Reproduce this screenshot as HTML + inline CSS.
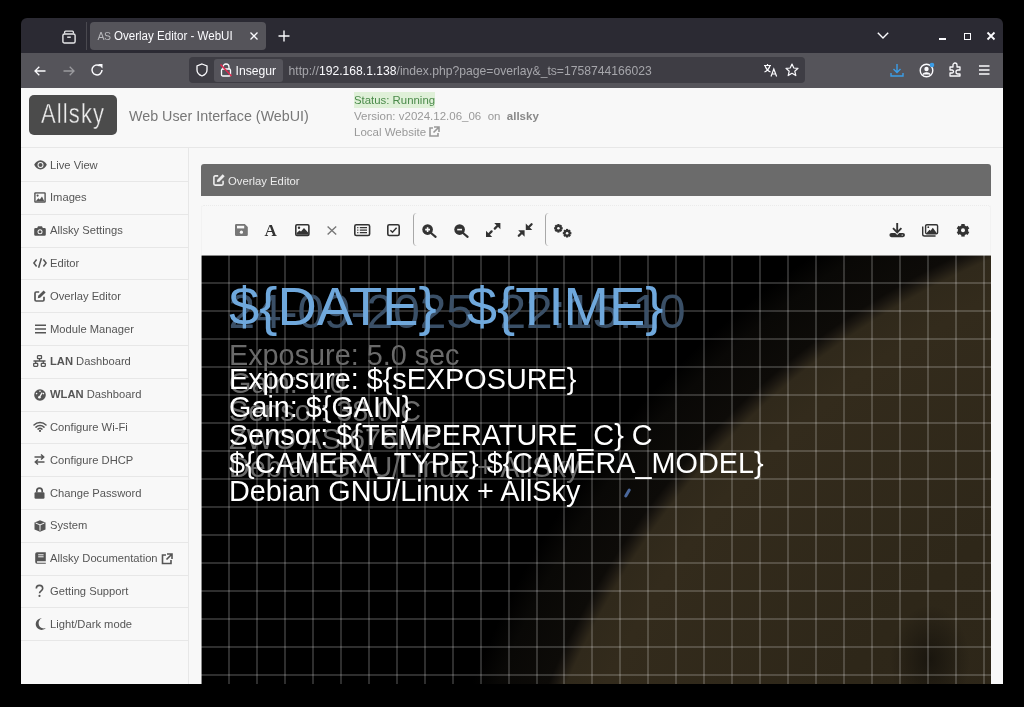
<!DOCTYPE html>
<html><head><meta charset="utf-8">
<style>
*{margin:0;padding:0;box-sizing:border-box}
html,body{width:1024px;height:707px;background:#000;overflow:hidden;font-family:"Liberation Sans",sans-serif}
.a{position:absolute}
.t{position:absolute;white-space:nowrap;line-height:1}
svg{position:absolute;overflow:visible}
#win{position:absolute;left:21px;top:18px;width:982px;height:666px;background:#2b2a33;border-radius:6px 6px 0 0;overflow:hidden}
.side{position:absolute;left:21px;width:167px;height:33px}
.side span{position:absolute;left:29px;top:12.5px;font-size:11.2px;color:#555;line-height:1;white-space:nowrap}

</style></head><body><div style="position:absolute;left:0;top:0;width:1024px;height:707px;will-change:transform">
<div id="win"></div>

<!-- ============ TAB BAR ============ -->
<svg style="left:61.5px;top:29.5px" width="14" height="14" viewBox="0 0 14 14"><path d="M2.6 3.6V2.2A1 1 0 0 1 3.6 1.2H10.4A1 1 0 0 1 11.4 2.2V3.6" fill="none" stroke="#e8e8ea" stroke-width="1.3"/><rect x="0.9" y="4" width="12.2" height="9" rx="1.6" fill="none" stroke="#e8e8ea" stroke-width="1.4"/><path d="M5.2 7.2H8.8" stroke="#e8e8ea" stroke-width="1.4"/></svg>
<div class="a" style="left:86px;top:22px;width:1px;height:28px;background:#4a4950"></div>
<div class="a" style="left:90px;top:22px;width:176px;height:28px;background:#55545a;border-radius:4px"></div>
<div class="t" style="left:97.5px;top:30.5px;font-size:10.5px;color:#b8b8bc;letter-spacing:-0.6px">AS</div>
<div class="t" style="left:113.5px;top:29.5px;font-size:12.3px;color:#fbfbfe;transform:scaleX(0.94);transform-origin:0 0">Overlay Editor - WebUI</div>
<svg style="left:250px;top:32px" width="8" height="8" viewBox="0 0 8 8"><path d="M0.5 0.5L7.5 7.5M7.5 0.5L0.5 7.5" stroke="#fbfbfe" stroke-width="1.3"/></svg>
<svg style="left:278px;top:30px" width="12" height="12" viewBox="0 0 12 12"><path d="M6 0.5V11.5M0.5 6H11.5" stroke="#fbfbfe" stroke-width="1.4"/></svg>
<!-- window controls -->
<svg style="left:877px;top:32px" width="12" height="7" viewBox="0 0 12 7"><path d="M0.8 0.8L6 6L11.2 0.8" fill="none" stroke="#fbfbfe" stroke-width="1.4"/></svg>
<div class="a" style="left:939px;top:38px;width:7px;height:2px;background:#fbfbfe"></div>
<div class="a" style="left:963.5px;top:32.5px;width:7.5px;height:7.5px;border:1.7px solid #fbfbfe"></div>
<svg style="left:987px;top:32px" width="8" height="8" viewBox="0 0 8 8"><path d="M0.5 0.5L7.5 7.5M7.5 0.5L0.5 7.5" stroke="#fbfbfe" stroke-width="1.8"/></svg>

<!-- ============ NAV BAR ============ -->
<div class="a" style="left:21px;top:53px;width:982px;height:35px;background:#55545a"></div>
<svg style="left:34px;top:65.5px" width="12" height="10" viewBox="0 0 12 10"><path d="M11.5 5H1.2M5.3 0.8L1 5L5.3 9.2" fill="none" stroke="#fbfbfe" stroke-width="1.3"/></svg>
<svg style="left:63px;top:65.5px" width="12" height="10" viewBox="0 0 12 10"><path d="M0.5 5H10.8M6.7 0.8L11 5L6.7 9.2" fill="none" stroke="#9a9a9e" stroke-width="1.3"/></svg>
<svg style="left:90px;top:63px" width="14" height="14" viewBox="0 0 14 14"><path d="M12 7A5 5 0 1 1 9.8 2.8" fill="none" stroke="#fbfbfe" stroke-width="1.5"/><path d="M8 1H12.5V5.5Z" fill="#fbfbfe"/></svg>
<div class="a" style="left:189px;top:57px;width:616px;height:26px;background:#3e3d44;border-radius:4px"></div>
<svg style="left:196px;top:63px" width="12" height="14" viewBox="0 0 12 14"><path d="M6 1L11 3V7C11 10 8.5 12 6 13C3.5 12 1 10 1 7V3Z" fill="none" stroke="#fbfbfe" stroke-width="1.3"/></svg>
<div class="a" style="left:213.5px;top:59px;width:69px;height:22.5px;background:#55545b;border-radius:3px"></div>
<svg style="left:220px;top:63px" width="12" height="14" viewBox="0 0 12 14"><path d="M3 6V4A3 3 0 0 1 9 4V6" fill="none" stroke="#fbfbfe" stroke-width="1.3"/><rect x="1.5" y="6" width="9" height="7" rx="1.3" fill="none" stroke="#fbfbfe" stroke-width="1.3"/><path d="M0.5 1.5L11.5 13" stroke="#e22850" stroke-width="1.6"/></svg>
<div class="t" style="left:235.5px;top:64.5px;font-size:12.2px;color:#fbfbfe">Insegur</div>
<div class="t" style="left:288.5px;top:64.5px;font-size:12.15px;color:#a6a6ab">http://<span style="color:#fbfbfe">192.168.1.138</span>/index.php?page=overlay&amp;_ts=1758744166023</div>
<!-- translate -->
<svg style="left:763px;top:63px" width="15" height="14" viewBox="0 0 15 14"><path d="M1 2.5H8M4.5 1V2.5M2 2.5C3 6 5 8 7.5 9M7 2.5C6 6 4 8 1.5 9" fill="none" stroke="#fbfbfe" stroke-width="1.2"/><path d="M8 13.5L10.8 6L13.6 13.5M9 11H12.6" fill="none" stroke="#fbfbfe" stroke-width="1.2"/></svg>
<svg style="left:785px;top:63px" width="14" height="14" viewBox="0 0 14 14"><path d="M7 1L8.8 5L13 5.3L9.8 8.2L10.8 12.6L7 10.3L3.2 12.6L4.2 8.2L1 5.3L5.2 5Z" fill="none" stroke="#fbfbfe" stroke-width="1.2" stroke-linejoin="round"/></svg>
<!-- right icons -->
<svg style="left:890px;top:63px" width="14" height="14" viewBox="0 0 14 14"><path d="M7 1V9.5M3.5 6L7 9.5L10.5 6" fill="none" stroke="#3b9ee8" stroke-width="1.4"/><path d="M1 10V13H13V10" fill="none" stroke="#3b9ee8" stroke-width="1.4"/></svg>
<svg style="left:919px;top:62px" width="16" height="16" viewBox="0 0 16 16"><circle cx="7.5" cy="8.5" r="6.3" fill="none" stroke="#fbfbfe" stroke-width="1.4"/><circle cx="7.5" cy="7" r="2.2" fill="#fbfbfe"/><path d="M3.8 12.5C5 10.3 10 10.3 11.2 12.5" fill="#fbfbfe" stroke="#fbfbfe" stroke-width="1.2"/><circle cx="13" cy="3" r="2.3" fill="#3b9ee8"/></svg>
<svg style="left:949px;top:62px" width="14" height="15" viewBox="0 0 14 15"><path d="M1 5H4V3A2 2 0 0 1 8 3V5H11V8H9A2 2 0 0 0 9 12H11V14H1V11H3A1.5 1.5 0 0 0 3 8H1Z" fill="none" stroke="#fbfbfe" stroke-width="1.3" stroke-linejoin="round"/></svg>
<svg style="left:979px;top:65px" width="10.5" height="10" viewBox="0 0 10.5 10"><path d="M0 1H10.5M0 5H10.5M0 9H10.5" stroke="#fbfbfe" stroke-width="1.3"/></svg>

<!-- ============ PAGE ============ -->
<div class="a" style="left:21px;top:88px;width:982px;height:596px;background:#f8f8f8"></div>
<!-- header -->
<div class="a" style="left:21px;top:146.6px;width:982px;height:1px;background:#e7e7e7"></div>
<div class="a" style="left:28.5px;top:94.7px;width:88.5px;height:40.3px;background:#4b4b4b;border-radius:5px"></div>
<div class="t" style="left:40.5px;top:99.5px;font-size:27.5px;color:#ececec;-webkit-text-stroke:0.35px #4b4b4b;letter-spacing:1.4px;transform:scaleX(0.80);transform-origin:0 0">Allsky</div>
<div class="t" style="left:129px;top:108.5px;font-size:14.3px;color:#777">Web User Interface (WebUI)</div>
<div class="a" style="left:353.7px;top:92.3px;width:81.5px;height:16.1px;background:#dff0d8"></div>
<div class="t" style="left:354px;top:95px;font-size:11.4px;color:#4a8a4a">Status: Running</div>
<div class="t" style="left:354px;top:111px;font-size:11.5px;color:#999">Version: v2024.12.06_06&nbsp; on&nbsp; <b style="color:#888">allsky</b></div>
<div class="t" style="left:354px;top:127px;font-size:11.5px;color:#999">Local Website</div>
<svg style="left:428px;top:126px" width="12" height="12" viewBox="0 0 12 12"><path d="M5 2H2V10H10V7" fill="none" stroke="#999" stroke-width="1.6"/><path d="M6 1H11V6M11 1L5.5 6.5" fill="none" stroke="#999" stroke-width="1.6"/></svg>

<!-- sidebar -->
<div class="a" style="left:188px;top:147px;width:1px;height:537px;background:#e7e7e7"></div>
<div id="sidebar">
<div class="side" style="top:147.0px"><svg style="left:12.5px;top:13.2px" width="13" height="10" viewBox="0 0 13 10"><path d="M6.5 0.3C3.6 0.3 1.3 2.5 0.2 4.8C1.3 7.1 3.6 9.5 6.5 9.5S11.7 7.1 12.8 4.8C11.7 2.5 9.4 0.3 6.5 0.3Z" fill="#555"/><circle cx="6.5" cy="4.9" r="3" fill="#f8f8f8"/><circle cx="6.5" cy="4.9" r="2" fill="#555"/></svg><span>Live View</span></div>
<div class="a" style="left:21px;top:181px;width:167px;height:1px;background:#e7e7e7"></div>
<div class="side" style="top:179.8px"><svg style="left:13px;top:12.3px" width="12" height="11" viewBox="0 0 12 11"><rect x="0.2" y="0.2" width="11.6" height="10.6" rx="1.2" fill="#555"/><rect x="1.6" y="1.6" width="8.8" height="7.8" fill="#f8f8f8"/><circle cx="3.6" cy="3.6" r="1.1" fill="#555"/><path d="M1.6 9.4L4.3 6.2L5.8 7.6L8 4.6L10.4 9.4Z" fill="#555"/></svg><span>Images</span></div>
<div class="a" style="left:21px;top:214px;width:167px;height:1px;background:#e7e7e7"></div>
<div class="side" style="top:212.6px"><svg style="left:13px;top:13px" width="12" height="10" viewBox="0 0 12 10"><path d="M0.2 3.2A1.3 1.3 0 0 1 1.5 1.9H3.2L4 0.3H8L8.8 1.9H10.5A1.3 1.3 0 0 1 11.8 3.2V8.5A1.3 1.3 0 0 1 10.5 9.8H1.5A1.3 1.3 0 0 1 0.2 8.5Z" fill="#555"/><circle cx="6" cy="5.7" r="2.5" fill="#f8f8f8"/><circle cx="6" cy="5.7" r="1.5" fill="#555"/></svg><span>Allsky Settings</span></div>
<div class="a" style="left:21px;top:247px;width:167px;height:1px;background:#e7e7e7"></div>
<div class="side" style="top:245.4px"><svg style="left:11.8px;top:12.8px" width="14" height="10" viewBox="0 0 14 10"><path d="M3.6 1.5L0.9 5L3.6 8.5M10.4 1.5L13.1 5L10.4 8.5M8.4 0.2L5.6 9.8" fill="none" stroke="#555" stroke-width="1.5"/></svg><span>Editor</span></div>
<div class="a" style="left:21px;top:279px;width:167px;height:1px;background:#e7e7e7"></div>
<div class="side" style="top:278.2px"><svg style="left:13px;top:11.5px" width="12" height="12" viewBox="0 0 12 12"><path d="M5.2 2H2.2A1.2 1.2 0 0 0 1 3.2V9.8A1.2 1.2 0 0 0 2.2 11H8.8A1.2 1.2 0 0 0 10 9.8V6.8" fill="none" stroke="#555" stroke-width="1.7"/><path d="M9.6 0.4L11.6 2.4L6.2 7.8L3.8 8.2L4.2 5.8Z" fill="#555"/></svg><span>Overlay Editor</span></div>
<div class="a" style="left:21px;top:312px;width:167px;height:1px;background:#e7e7e7"></div>
<div class="side" style="top:311.0px"><svg style="left:13.5px;top:12.5px" width="11" height="10" viewBox="0 0 11 10"><path d="M0 1.2H11M0 5H11M0 8.8H11" stroke="#555" stroke-width="1.5"/></svg><span>Module Manager</span></div>
<div class="a" style="left:21px;top:345px;width:167px;height:1px;background:#e7e7e7"></div>
<div class="side" style="top:343.8px"><svg style="left:12px;top:11.2px" width="13" height="12" viewBox="0 0 13 12"><rect x="4.5" y="0.7" width="4" height="3" rx="0.5" fill="none" stroke="#555" stroke-width="1.3"/><rect x="0.7" y="8.3" width="4" height="3" rx="0.5" fill="none" stroke="#555" stroke-width="1.3"/><rect x="8.3" y="8.3" width="4" height="3" rx="0.5" fill="none" stroke="#555" stroke-width="1.3"/><path d="M6.5 3.7V6M0.5 6H12.5M2.7 6V8.3M10.3 6V8.3" fill="none" stroke="#555" stroke-width="1.3"/></svg><span><b>LAN</b> Dashboard</span></div>
<div class="a" style="left:21px;top:378px;width:167px;height:1px;background:#e7e7e7"></div>
<div class="side" style="top:376.6px"><svg style="left:12.5px;top:12px" width="12" height="12" viewBox="0 0 12 12"><circle cx="6" cy="6" r="5.8" fill="#555"/><circle cx="6" cy="2.3" r="0.8" fill="#f8f8f8"/><circle cx="2.6" cy="4.6" r="0.8" fill="#f8f8f8"/><circle cx="9.4" cy="4.6" r="0.8" fill="#f8f8f8"/><path d="M5.2 8.6L8.2 3.6" stroke="#f8f8f8" stroke-width="1.3"/><circle cx="5.4" cy="8.3" r="1.3" fill="#f8f8f8"/></svg><span><b>WLAN</b> Dashboard</span></div>
<div class="a" style="left:21px;top:411px;width:167px;height:1px;background:#e7e7e7"></div>
<div class="side" style="top:409.4px"><svg style="left:12px;top:12px" width="14" height="11" viewBox="0 0 14 11"><path d="M1 4C4.3 0.7 9.7 0.7 13 4M3 6.1C5.2 3.9 8.8 3.9 11 6.1M5 8.1C6.1 7.1 7.9 7.1 9 8.1" fill="none" stroke="#555" stroke-width="1.5" stroke-linecap="round"/><circle cx="7" cy="9.9" r="1.1" fill="#555"/></svg><span>Configure Wi-Fi</span></div>
<div class="a" style="left:21px;top:443px;width:167px;height:1px;background:#e7e7e7"></div>
<div class="side" style="top:442.2px"><svg style="left:13px;top:12px" width="11" height="11" viewBox="0 0 11 11"><path d="M0.5 3H9.5M7 0.5L9.7 3L7 5.5M10.5 8H1.5M4 5.5L1.3 8L4 10.5" fill="none" stroke="#555" stroke-width="1.5"/></svg><span>Configure DHCP</span></div>
<div class="a" style="left:21px;top:476px;width:167px;height:1px;background:#e7e7e7"></div>
<div class="side" style="top:475.0px"><svg style="left:13px;top:11.8px" width="11" height="12" viewBox="0 0 11 12"><path d="M2.8 5.5V3.8A2.7 2.7 0 0 1 8.2 3.8V5.5" fill="none" stroke="#555" stroke-width="1.7"/><rect x="0.5" y="5.2" width="10" height="6.6" rx="1.2" fill="#555"/></svg><span>Change Password</span></div>
<div class="a" style="left:21px;top:509px;width:167px;height:1px;background:#e7e7e7"></div>
<div class="side" style="top:507.8px"><svg style="left:13px;top:11.8px" width="12" height="12" viewBox="0 0 12 12"><path d="M6 0.2L11.5 2.4V9.4L6 11.8L0.5 9.4V2.4Z" fill="#555"/><path d="M1.6 3L6 4.9L10.4 3M6 4.9V10.6" fill="none" stroke="#f8f8f8" stroke-width="1"/></svg><span>System</span></div>
<div class="a" style="left:21px;top:542px;width:167px;height:1px;background:#e7e7e7"></div>
<div class="side" style="top:540.6px"><svg style="left:13.5px;top:11.8px" width="11" height="12" viewBox="0 0 11 12"><path d="M2 0.2H10.8V9.2H2.2A1.2 1.2 0 0 0 2.2 10.8H10.8V11.8H2A2 2 0 0 1 0.2 9.8V2A1.8 1.8 0 0 1 2 0.2Z" fill="#555"/><path d="M3.2 2.8H8.6M3.2 4.8H8.6" stroke="#f8f8f8" stroke-width="1"/></svg><span>Allsky Documentation</span><svg style="left:140px;top:12.5px" width="12" height="12" viewBox="0 0 12 12"><path d="M5 2H1.5V10.5H10V7" fill="none" stroke="#555" stroke-width="1.6"/><path d="M6 1H11V6M11 1L5.5 6.5" fill="none" stroke="#555" stroke-width="1.6"/></svg></div>
<div class="a" style="left:21px;top:575px;width:167px;height:1px;background:#e7e7e7"></div>
<div class="side" style="top:573.4px"><svg style="left:13.5px;top:11.5px" width="9" height="12" viewBox="0 0 9 12"><path d="M1.3 3.6A3.2 3.2 0 0 1 7.7 3.6C7.7 5.8 4.5 5.8 4.5 8.2" fill="none" stroke="#555" stroke-width="1.6"/><circle cx="4.5" cy="10.9" r="1.05" fill="#555"/></svg><span>Getting Support</span></div>
<div class="a" style="left:21px;top:607px;width:167px;height:1px;background:#e7e7e7"></div>
<div class="side" style="top:606.2px"><svg style="left:13.5px;top:11.8px" width="11" height="12" viewBox="0 0 11 12"><path d="M6.8 0.3A5.8 5.8 0 1 0 10.8 10A4.6 4.6 0 0 1 6.8 0.3Z" fill="#555"/></svg><span>Light/Dark mode</span></div>
<div class="a" style="left:21px;top:640px;width:167px;height:1px;background:#e7e7e7"></div>
</div><!--/sidebar-->

<!-- main panel header -->
<div class="a" style="left:201px;top:164px;width:790px;height:32px;background:#6b6b6b;border-radius:3px 3px 0 0"></div>
<svg style="left:212.8px;top:173.8px" width="12" height="12" viewBox="0 0 12 12"><path d="M5.2 1.9H2.2A1.3 1.3 0 0 0 0.9 3.2V9.8A1.3 1.3 0 0 0 2.2 11.1H8.8A1.3 1.3 0 0 0 10.1 9.8V6.8" fill="none" stroke="#ececec" stroke-width="1.6"/><path d="M9.7 0.3L11.7 2.3L6.3 7.7L3.9 8.1L4.3 5.7Z" fill="#ececec"/></svg>
<div class="t" style="left:228px;top:175.5px;font-size:11.3px;color:#ececec">Overlay Editor</div>
<!-- toolbar -->
<div class="a" style="left:201px;top:205px;width:790px;height:51px;border:1px dotted #ebebeb;border-bottom:none;border-radius:3px 3px 0 0"></div>
<div id="toolbar">
<svg style="left:234.7px;top:224.3px" width="12.8" height="12" viewBox="0 0 12.8 12"><path d="M0 1.3A1.3 1.3 0 0 1 1.3 0H9.8L12.8 3V10.7A1.3 1.3 0 0 1 11.5 12H1.3A1.3 1.3 0 0 1 0 10.7Z" fill="#777"/><rect x="2" y="1.8" width="7.2" height="2.6" fill="#f8f8f8"/><circle cx="6.4" cy="8.2" r="1.6" fill="#f8f8f8"/></svg>
<div class="t" style="left:264.5px;top:222.2px;font-family:'Liberation Serif',serif;font-weight:bold;font-size:17px;color:#333">A</div>
<svg style="left:295.3px;top:224px" width="14.7" height="12.3" viewBox="0 0 14.7 12.3"><rect x="0.8" y="0.8" width="13.1" height="10.7" rx="1.2" fill="none" stroke="#333" stroke-width="1.6"/><circle cx="4" cy="3.8" r="1.2" fill="#333"/><path d="M1.6 10.7V9L4.5 6.5L6 7.6L9 4L13.1 8.6V10.7Z" fill="#333"/></svg>
<svg style="left:327px;top:226px" width="9.8" height="8.9" viewBox="0 0 9.8 8.9"><path d="M0.6 0.5L9.2 8.4M9.2 0.5L0.6 8.4" stroke="#777" stroke-width="1.4"/></svg>
<svg style="left:353.8px;top:224px" width="16.4" height="12.3" viewBox="0 0 16.4 12.3"><rect x="0.8" y="0.8" width="14.8" height="10.7" rx="1.5" fill="none" stroke="#333" stroke-width="1.6"/><path d="M3.2 3.6H4.4M3.2 6.15H4.4M3.2 8.7H4.4M5.8 3.6H13M5.8 6.15H13M5.8 8.7H13" stroke="#333" stroke-width="1.3"/></svg>
<svg style="left:387px;top:224px" width="13" height="12.3" viewBox="0 0 13 12.3"><rect x="0.8" y="0.8" width="11.4" height="10.7" rx="1.5" fill="none" stroke="#333" stroke-width="1.6"/><path d="M3.4 6.2L5.5 8.2L9.6 3.8" fill="none" stroke="#333" stroke-width="1.5"/></svg>
<div class="a" style="left:413px;top:213.3px;width:8px;height:32.5px;border-left:1px solid #a8a8a8;border-radius:4px 0 0 4px"></div>
<div class="a" style="left:545.3px;top:213.3px;width:8px;height:32.5px;border-left:1px solid #a8a8a8;border-radius:4px 0 0 4px"></div>
<svg style="left:421.7px;top:223.5px" width="14.6" height="13.5" viewBox="0 0 14.6 13.5"><circle cx="5.6" cy="5.6" r="5.3" fill="#333"/><path d="M3.2 5.6H8M5.6 3.2V8" stroke="#f8f8f8" stroke-width="1.6"/><path d="M9 9L13.6 12.8" stroke="#333" stroke-width="2.2" stroke-linecap="round"/></svg>
<svg style="left:453.9px;top:223.5px" width="14.6" height="13.5" viewBox="0 0 14.6 13.5"><circle cx="5.6" cy="5.6" r="5.3" fill="#333"/><path d="M3.2 5.6H8" stroke="#f8f8f8" stroke-width="1.6"/><path d="M9 9L13.6 12.8" stroke="#333" stroke-width="2.2" stroke-linecap="round"/></svg>
<svg style="left:485.9px;top:223px" width="14.4" height="14" viewBox="0 0 14.4 14"><path d="M14.4 0V6.2L8.2 0Z M0 14V7.8L6.2 14Z" fill="#333"/><path d="M11.6 2.8L8.8 5.6M2.8 11.2L5.6 8.4" stroke="#333" stroke-width="2.3" stroke-linecap="round"/></svg>
<svg style="left:517.5px;top:223px" width="14.4" height="14" viewBox="0 0 14.4 14"><path d="M7.8 0.5V7H14.3Z M0.2 7.2H6.6V13.7Z" fill="#333"/><path d="M10.6 4.2L13.6 1.2M3.8 9.8L0.8 12.8" stroke="#333" stroke-width="2.3" stroke-linecap="round"/></svg>
<svg style="left:553.5px;top:223.5px" width="17.5" height="13.5" viewBox="0 0 17.5 13.5"><rect x="3.30" y="-0.00" width="2.20" height="2.70" transform="rotate(0.0 4.4 4.3)" fill="#333"/><rect x="3.30" y="-0.00" width="2.20" height="2.70" transform="rotate(45.0 4.4 4.3)" fill="#333"/><rect x="3.30" y="-0.00" width="2.20" height="2.70" transform="rotate(90.0 4.4 4.3)" fill="#333"/><rect x="3.30" y="-0.00" width="2.20" height="2.70" transform="rotate(135.0 4.4 4.3)" fill="#333"/><rect x="3.30" y="-0.00" width="2.20" height="2.70" transform="rotate(180.0 4.4 4.3)" fill="#333"/><rect x="3.30" y="-0.00" width="2.20" height="2.70" transform="rotate(225.0 4.4 4.3)" fill="#333"/><rect x="3.30" y="-0.00" width="2.20" height="2.70" transform="rotate(270.0 4.4 4.3)" fill="#333"/><rect x="3.30" y="-0.00" width="2.20" height="2.70" transform="rotate(315.0 4.4 4.3)" fill="#333"/><circle cx="4.4" cy="4.3" r="3.4" fill="#333"/><circle cx="4.4" cy="4.3" r="1.3" fill="#f8f8f8"/><rect x="12.00" y="4.90" width="2.20" height="2.70" transform="rotate(0.0 13.1 9.2)" fill="#333"/><rect x="12.00" y="4.90" width="2.20" height="2.70" transform="rotate(45.0 13.1 9.2)" fill="#333"/><rect x="12.00" y="4.90" width="2.20" height="2.70" transform="rotate(90.0 13.1 9.2)" fill="#333"/><rect x="12.00" y="4.90" width="2.20" height="2.70" transform="rotate(135.0 13.1 9.2)" fill="#333"/><rect x="12.00" y="4.90" width="2.20" height="2.70" transform="rotate(180.0 13.1 9.2)" fill="#333"/><rect x="12.00" y="4.90" width="2.20" height="2.70" transform="rotate(225.0 13.1 9.2)" fill="#333"/><rect x="12.00" y="4.90" width="2.20" height="2.70" transform="rotate(270.0 13.1 9.2)" fill="#333"/><rect x="12.00" y="4.90" width="2.20" height="2.70" transform="rotate(315.0 13.1 9.2)" fill="#333"/><circle cx="13.1" cy="9.2" r="3.4" fill="#333"/><circle cx="13.1" cy="9.2" r="1.3" fill="#f8f8f8"/></svg>
<svg style="left:889.8px;top:222.7px" width="14.4" height="14.2" viewBox="0 0 14.4 14.2"><path d="M7.2 0V8.5" stroke="#333" stroke-width="1.9"/><path d="M3 5.2L7.2 9.4L11.4 5.2" fill="none" stroke="#333" stroke-width="1.9"/><path d="M1.5 10H5.2L7.2 12L9.2 10H12.9A1.5 1.5 0 0 1 12.9 14.2H1.5A1.5 1.5 0 0 1 1.5 10Z" fill="#333"/><circle cx="12.2" cy="12.1" r="0.7" fill="#f8f8f8"/></svg>
<svg style="left:921.8px;top:223.5px" width="16.3" height="12.7" viewBox="0 0 16.3 12.7"><rect x="3.6" y="0.7" width="12" height="9" rx="1.3" fill="none" stroke="#333" stroke-width="1.4"/><path d="M0.7 2.6V10.2A1.8 1.8 0 0 0 2.5 12H13.6" fill="none" stroke="#333" stroke-width="1.4"/><circle cx="6.3" cy="3.2" r="0.9" fill="#333"/><path d="M4.6 8.9L7.5 5.8L8.6 6.7L10.8 3.8L14.7 8.9Z" fill="#333"/></svg>
<svg style="left:955.5px;top:222.5px" width="14" height="14.6" viewBox="0 0 14 14.6"><rect x="5.30" y="1.00" width="3.40" height="3.60" transform="rotate(0.0 7 7.3)" fill="#333"/><rect x="5.30" y="1.00" width="3.40" height="3.60" transform="rotate(60.0 7 7.3)" fill="#333"/><rect x="5.30" y="1.00" width="3.40" height="3.60" transform="rotate(120.0 7 7.3)" fill="#333"/><rect x="5.30" y="1.00" width="3.40" height="3.60" transform="rotate(180.0 7 7.3)" fill="#333"/><rect x="5.30" y="1.00" width="3.40" height="3.60" transform="rotate(240.0 7 7.3)" fill="#333"/><rect x="5.30" y="1.00" width="3.40" height="3.60" transform="rotate(300.0 7 7.3)" fill="#333"/><circle cx="7" cy="7.3" r="5.1" fill="#333"/><circle cx="7" cy="7.3" r="2.0" fill="#f8f8f8"/></svg>
</div><!--/toolbar-->

<!-- image -->
<div id="img" class="a" style="left:201px;top:255px;width:790px;height:429px;overflow:hidden;background:#000">
<div class="a" style="left:0;top:0;width:790px;height:429px;background:radial-gradient(circle at 1104px 742px, #2b2418 0px, #2e2719 560px, #332b1c 765px, #30291b 802px, #1a1610 812px, #0d0b08 819px, #090806 865px, #000 890px)"></div>
<div class="a" style="left:0;top:0;width:790px;height:429px;background:radial-gradient(ellipse 40px 55px at 729px 405px, rgba(0,0,0,.45), rgba(0,0,0,0))"></div>
<div class="a" style="left:-1px;top:0;width:2px;height:429px;background:rgba(255,255,255,.18)"></div>
<div class="a" style="left:27px;top:0;width:2px;height:429px;background:rgba(255,255,255,.18)"></div>
<div class="a" style="left:55px;top:0;width:2px;height:429px;background:rgba(255,255,255,.18)"></div>
<div class="a" style="left:83px;top:0;width:2px;height:429px;background:rgba(255,255,255,.18)"></div>
<div class="a" style="left:111px;top:0;width:2px;height:429px;background:rgba(255,255,255,.18)"></div>
<div class="a" style="left:139px;top:0;width:2px;height:429px;background:rgba(255,255,255,.18)"></div>
<div class="a" style="left:167px;top:0;width:2px;height:429px;background:rgba(255,255,255,.18)"></div>
<div class="a" style="left:195px;top:0;width:2px;height:429px;background:rgba(255,255,255,.18)"></div>
<div class="a" style="left:223px;top:0;width:2px;height:429px;background:rgba(255,255,255,.18)"></div>
<div class="a" style="left:251px;top:0;width:2px;height:429px;background:rgba(255,255,255,.18)"></div>
<div class="a" style="left:279px;top:0;width:2px;height:429px;background:rgba(255,255,255,.18)"></div>
<div class="a" style="left:307px;top:0;width:2px;height:429px;background:rgba(255,255,255,.18)"></div>
<div class="a" style="left:335px;top:0;width:2px;height:429px;background:rgba(255,255,255,.18)"></div>
<div class="a" style="left:362px;top:0;width:2px;height:429px;background:rgba(255,255,255,.18)"></div>
<div class="a" style="left:390px;top:0;width:2px;height:429px;background:rgba(255,255,255,.18)"></div>
<div class="a" style="left:418px;top:0;width:2px;height:429px;background:rgba(255,255,255,.18)"></div>
<div class="a" style="left:446px;top:0;width:2px;height:429px;background:rgba(255,255,255,.18)"></div>
<div class="a" style="left:474px;top:0;width:2px;height:429px;background:rgba(255,255,255,.18)"></div>
<div class="a" style="left:502px;top:0;width:2px;height:429px;background:rgba(255,255,255,.18)"></div>
<div class="a" style="left:530px;top:0;width:2px;height:429px;background:rgba(255,255,255,.18)"></div>
<div class="a" style="left:558px;top:0;width:2px;height:429px;background:rgba(255,255,255,.18)"></div>
<div class="a" style="left:586px;top:0;width:2px;height:429px;background:rgba(255,255,255,.18)"></div>
<div class="a" style="left:614px;top:0;width:2px;height:429px;background:rgba(255,255,255,.18)"></div>
<div class="a" style="left:642px;top:0;width:2px;height:429px;background:rgba(255,255,255,.18)"></div>
<div class="a" style="left:670px;top:0;width:2px;height:429px;background:rgba(255,255,255,.18)"></div>
<div class="a" style="left:698px;top:0;width:2px;height:429px;background:rgba(255,255,255,.18)"></div>
<div class="a" style="left:726px;top:0;width:2px;height:429px;background:rgba(255,255,255,.18)"></div>
<div class="a" style="left:754px;top:0;width:2px;height:429px;background:rgba(255,255,255,.18)"></div>
<div class="a" style="left:782px;top:0;width:2px;height:429px;background:rgba(255,255,255,.18)"></div>
<div class="a" style="left:0;top:-1px;width:790px;height:2px;background:rgba(255,255,255,.18)"></div>
<div class="a" style="left:0;top:27px;width:790px;height:2px;background:rgba(255,255,255,.18)"></div>
<div class="a" style="left:0;top:55px;width:790px;height:2px;background:rgba(255,255,255,.18)"></div>
<div class="a" style="left:0;top:83px;width:790px;height:2px;background:rgba(255,255,255,.18)"></div>
<div class="a" style="left:0;top:111px;width:790px;height:2px;background:rgba(255,255,255,.18)"></div>
<div class="a" style="left:0;top:139px;width:790px;height:2px;background:rgba(255,255,255,.18)"></div>
<div class="a" style="left:0;top:167px;width:790px;height:2px;background:rgba(255,255,255,.18)"></div>
<div class="a" style="left:0;top:195px;width:790px;height:2px;background:rgba(255,255,255,.18)"></div>
<div class="a" style="left:0;top:223px;width:790px;height:2px;background:rgba(255,255,255,.18)"></div>
<div class="a" style="left:0;top:251px;width:790px;height:2px;background:rgba(255,255,255,.18)"></div>
<div class="a" style="left:0;top:279px;width:790px;height:2px;background:rgba(255,255,255,.18)"></div>
<div class="a" style="left:0;top:307px;width:790px;height:2px;background:rgba(255,255,255,.18)"></div>
<div class="a" style="left:0;top:335px;width:790px;height:2px;background:rgba(255,255,255,.18)"></div>
<div class="a" style="left:0;top:363px;width:790px;height:2px;background:rgba(255,255,255,.18)"></div>
<div class="a" style="left:0;top:391px;width:790px;height:2px;background:rgba(255,255,255,.18)"></div>
<div class="a" style="left:0;top:419px;width:790px;height:2px;background:rgba(255,255,255,.18)"></div>
<div class="t" style="left:27.4px;top:32.57px;font-size:47.8px;color:#3a4f66">24-09-2025&nbsp; 22:15:10</div>
<div class="t" style="left:28px;top:86.42px;font-size:28.8px;color:#6a6a6a">Exposure: 5.0 sec</div>
<div class="t" style="left:28px;top:114.42px;font-size:28.8px;color:#6a6a6a">Gain: 7.0</div>
<div class="t" style="left:28px;top:142.42px;font-size:28.8px;color:#6a6a6a">Sensor: 38.0 C</div>
<div class="t" style="left:28px;top:170.42px;font-size:28.8px;color:#6a6a6a">ZWO ASI676MC</div>
<div class="t" style="left:28px;top:198.42px;font-size:28.8px;color:#6a6a6a">Debian GNU/Linux + AllSky</div>
<div class="t" style="left:28px;top:25.45px;font-size:54.4px;color:#6fa8dc">${DATE}&nbsp; ${TIME}</div>
<div class="t" style="left:28px;top:110.12px;font-size:28.8px;color:#fff">Exposure: ${sEXPOSURE}</div>
<div class="t" style="left:28px;top:138.12px;font-size:28.8px;color:#fff">Gain: ${GAIN}</div>
<div class="t" style="left:28px;top:166.12px;font-size:28.8px;color:#fff">Sensor: ${TEMPERATURE_C} C</div>
<div class="t" style="left:28px;top:194.12px;font-size:28.8px;color:#fff">${CAMERA_TYPE} ${CAMERA_MODEL}</div>
<div class="t" style="left:28px;top:222.12px;font-size:28.8px;color:#fff">Debian GNU/Linux + AllSky</div>
<div class="a" style="left:0;top:0;width:1px;height:429px;background:rgba(248,248,248,.45)"></div>
<div class="a" style="left:0;top:0;width:790px;height:1px;background:rgba(248,248,248,.45)"></div>
<div class="a" style="left:425px;top:233px;width:3px;height:10px;background:#5a7fc0;transform:rotate(30deg);border-radius:2px;opacity:.8"></div>
</div><!--/img-->
</div></body></html>
